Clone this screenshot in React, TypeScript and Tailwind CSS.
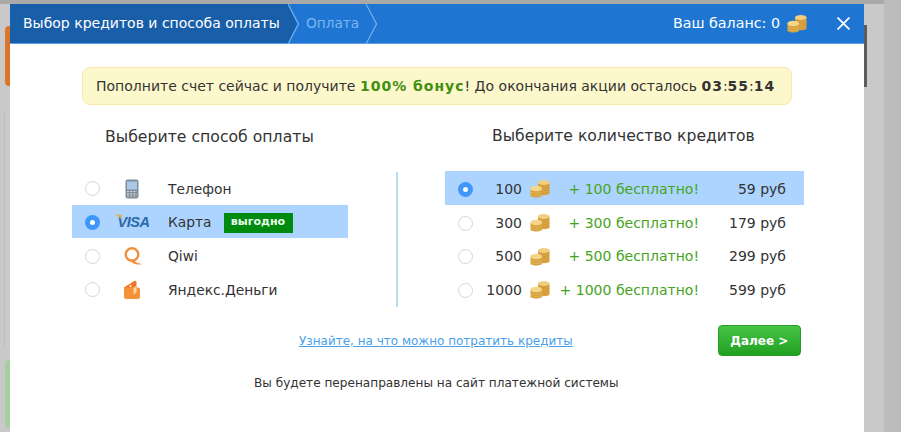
import React from "react";

const font = "font-['DejaVu_Sans',sans-serif]";

function Coins({ className }: { className?: string }) {
  const stripes = (x: number, w: number, from: number, to: number) => {
    const lines = [];
    for (let y = from; y < to; y += 2.4) {
      lines.push(
        <path key={`${x}-${y}`} d={`M${x} ${y} q${w / 2} 2.4 ${w} 0`} fill="none" stroke="#bd8d34" strokeWidth="0.5" />
      );
    }
    return lines;
  };
  return (
    <svg viewBox="0 0 20 20" className={className}>
      <path d="M8 3.5 V15 q5.5 2.4 11.5 0 V3.5Z" fill="#dba544" />
      <ellipse cx="13.75" cy="3.5" rx="5.75" ry="2.6" fill="#f2cf7e" />
      {stripes(8, 11.5, 6, 15)}
      <path d="M.5 9.5 V17 q5.5 3 11.5 0 V9.5Z" fill="#e3b04e" />
      <ellipse cx="6.25" cy="9.5" rx="5.75" ry="2.7" fill="#f5d588" />
      {stripes(0.5, 11.5, 12, 17)}
    </svg>
  );
}

function Radio({ checked }: { checked?: boolean }) {
  if (checked) {
    return (
      <span className="flex h-[15px] w-[15px] shrink-0 items-center justify-center rounded-full bg-[#3f97fb]">
        <span className="h-[5px] w-[5px] rounded-full bg-white" />
      </span>
    );
  }
  return <span className="h-[15px] w-[15px] shrink-0 rounded-full border border-[#d6d6d6] bg-white" />;
}

function PhoneIcon() {
  return (
    <svg viewBox="0 0 14 20" className="h-[20px] w-[14px]">
      <rect x="0.5" y="0.5" width="13" height="19" rx="2" fill="#7f8c99" />
      <rect x="2" y="2.5" width="10" height="8" fill="#a8c8e6" />
      <path d="M2 12.5h10M2 14.8h10M2 17h10" stroke="#d4dae0" strokeWidth="1.2" strokeDasharray="2 1.2" />
    </svg>
  );
}

function VisaIcon() {
  return (
    <span className="relative ml-[3px] text-[14.5px] font-bold italic leading-none tracking-[-0.4px] text-[#2a6aa8] font-['Liberation_Sans',sans-serif]">
      <svg viewBox="0 0 8 5" className="absolute -left-[3px] -top-[1px] h-[5px] w-[8px]">
        <path d="M0 0 L8 1.2 L6.6 5 C5 2.6 3 1 0 0Z" fill="#e8a93a" />
      </svg>
      VISA
    </span>
  );
}

function QiwiIcon() {
  return (
    <svg viewBox="0 0 20 20" className="h-[20px] w-[20px]">
      <circle cx="10" cy="8.5" r="6.3" fill="none" stroke="#f0913a" strokeWidth="2.4" />
      <path d="M10 13 C13 16.5 16 17 20 18 C15 19.5 11 18 8.5 15Z" fill="#f0913a" />
    </svg>
  );
}

function WalletIcon() {
  return (
    <svg viewBox="0 0 20 20" className="h-[20px] w-[20px]">
      <path d="M2 7.5 L12.5 .8 Q14.5 .3 14.5 2.5 V10 H2Z" fill="#ee7628" />
      <path d="M2 7.5 H16 Q18 7.5 18 9.5 V17 Q18 19 16 19 H4 Q2 19 2 17Z" fill="#f49238" />
      <path d="M14.5 6 V12.5 L11.5 14.5 V8Z" fill="#fbd3a5" />
      <circle cx="8.5" cy="6" r="1" fill="#fff" />
    </svg>
  );
}

function Chevron({ className }: { className?: string }) {
  return (
    <svg viewBox="0 0 12 40" className={className}>
      <path d="M0 0 L10.5 20 L0 40" fill="none" stroke="#74b0ee" strokeWidth="1.2" />
    </svg>
  );
}

const methods = [
  { name: "Телефон", icon: <PhoneIcon /> },
  { name: "Карта", icon: <VisaIcon />, active: true, badge: "выгодно" },
  { name: "Qiwi", icon: <QiwiIcon /> },
  { name: "Яндекс.Деньги", icon: <WalletIcon /> },
];

const credits = [
  { amount: "100", price: "59 руб", active: true },
  { amount: "300", price: "179 руб" },
  { amount: "500", price: "299 руб" },
  { amount: "1000", price: "599 руб" },
];

export default function App() {
  return (
    <div className={`relative h-[432px] w-[901px] overflow-hidden bg-[#c9c9c9] pl-[10px] pt-[4px] ${font}`}>
      {/* page behind the overlay */}
      <div className="absolute left-0 top-0 h-[4px] w-full bg-[#a9a9a9]" />
      <div className="absolute right-0 top-0 h-full w-[17px] bg-[#bcbcbc]" />
      <div className="absolute left-[5px] top-[26px] h-[60px] w-[6px] rounded-l bg-[#d9762c]" />
      <div className="absolute left-[5px] top-[360px] h-[68px] w-[6px] rounded-l bg-[#a5cf9e]" />
      <div className="absolute left-[864px] top-[25px] h-[62px] w-[3px] bg-[#5c5c58]" />
      <div className="absolute left-[4px] top-[112px] h-[234px] w-[6px] border-l border-[#bcbcbc]" />

      <div className="relative h-[428px] w-[854px] bg-white">
        <div className="relative flex h-[40px] items-center border-b border-[#5d9fe4] bg-[#1e76d2] text-white">
          <div className="relative flex h-full w-[278px] items-center bg-[#195ea8] pl-[13px] text-[14px]">
            Выбор кредитов и способа оплаты
            <svg viewBox="0 0 9 40" className="absolute left-full top-0 h-[40px] w-[9px]">
              <path d="M0 0 L8.5 20 L0 40Z" fill="#195ea8" />
            </svg>
            <Chevron className="absolute left-full top-0 h-[40px] w-[12px]" />
          </div>
          <div className="relative flex h-full w-[78px] items-center pl-[18px] text-[13.7px] text-[#7db6f1]">
            Оплата
            <Chevron className="absolute left-full top-0 h-[40px] w-[12px]" />
          </div>
          <div className="ml-auto flex items-center pr-[14px] text-[14.25px]">
            Ваш баланс: 0
            <Coins className="ml-[7px] h-[20px] w-[20px]" />
            <svg viewBox="0 0 12 12" className="ml-[30px] h-[13px] w-[13px]">
              <path d="M.5 .5 L11.5 11.5 M11.5 .5 L.5 11.5" stroke="#fff" strokeWidth="1.6" />
            </svg>
          </div>
        </div>

        <div className="mx-[72px] mt-[23px] flex h-[38px] items-center rounded-lg border border-[#fbe8a6] bg-[#fdf8cc] pl-[13px] text-[14px] text-[#333]">
          Пополните счет сейчас и получите&nbsp;
          <b className="tracking-[1px] text-[#3f8f10]">100% бонус</b>! До окончания акции осталось&nbsp;
          <b className="tracking-[1px]">03</b>:<b className="tracking-[1px]">55</b>:<b className="tracking-[1px]">14</b>
        </div>

        <div className="mt-[20px] flex pl-[62px]">
          <div className="w-[276px]">
            <h2 className="ml-[33px] h-[21px] text-[15.7px] leading-[23px] text-[#333]">Выберите способ оплаты</h2>
            <div className="mt-[25px]">
              {methods.map((m) => (
                <div
                  key={m.name}
                  className={`flex h-[33.7px] items-center pl-[13px] pt-[2px] text-[13.8px] text-[#333] ${m.active ? "bg-[#acd4ff]" : ""}`}
                >
                  <Radio checked={m.active} />
                  <span className="flex w-[64px] shrink-0 justify-center">{m.icon}</span>
                  <span className="ml-[4px]">{m.name}</span>
                  {m.badge && (
                    <span className="ml-[12px] flex h-[20px] w-[69px] items-center justify-center bg-[#008a10] text-[11px] font-bold text-[#e8ffe8]">
                      {m.badge}
                    </span>
                  )}
                </div>
              ))}
            </div>
          </div>

          <div className="ml-[48px] mt-[47px] h-[135px] w-[2px] bg-[#bcdcf4]" />

          <div className="ml-[47px] w-[359px]">
            <h2 className="ml-[47px] h-[21px] text-[15.6px] leading-[23px] text-[#333]">Выберите количество кредитов</h2>
            <div className="mt-[25px]">
              {credits.map((c) => (
                <div
                  key={c.amount}
                  className={`flex h-[33.7px] items-center pl-[13px] pt-[3px] text-[14px] text-[#333] ${c.active ? "bg-[#acd4ff]" : ""}`}
                >
                  <Radio checked={c.active} />
                  <span className="w-[49px] shrink-0 text-right">{c.amount}</span>
                  <Coins className="ml-[8px] h-[20px] w-[20px] shrink-0" />
                  <span className="w-[149px] shrink-0 text-right text-[#46a31c]">
                    + {c.amount} бесплатно!
                  </span>
                  <span className="w-[87px] shrink-0 text-right">{c.price}</span>
                </div>
              ))}
            </div>
          </div>
        </div>

        <div className="mt-[18px] flex items-center pl-[289px]">
          <a className="text-[12px] text-[#4a9fe8] underline">Узнайте, на что можно потратить кредиты</a>
          <button className="ml-[145px] h-[31px] w-[83px] rounded border border-[#2b9a2b] bg-gradient-to-b from-[#45c545] to-[#20a020] text-[12px] font-bold text-white">
            Далее &gt;
          </button>
        </div>

        <p className="mt-[18px] pl-[244px] text-[12.1px] text-[#333]">Вы будете перенаправлены на сайт платежной системы</p>
      </div>
    </div>
  );
}
